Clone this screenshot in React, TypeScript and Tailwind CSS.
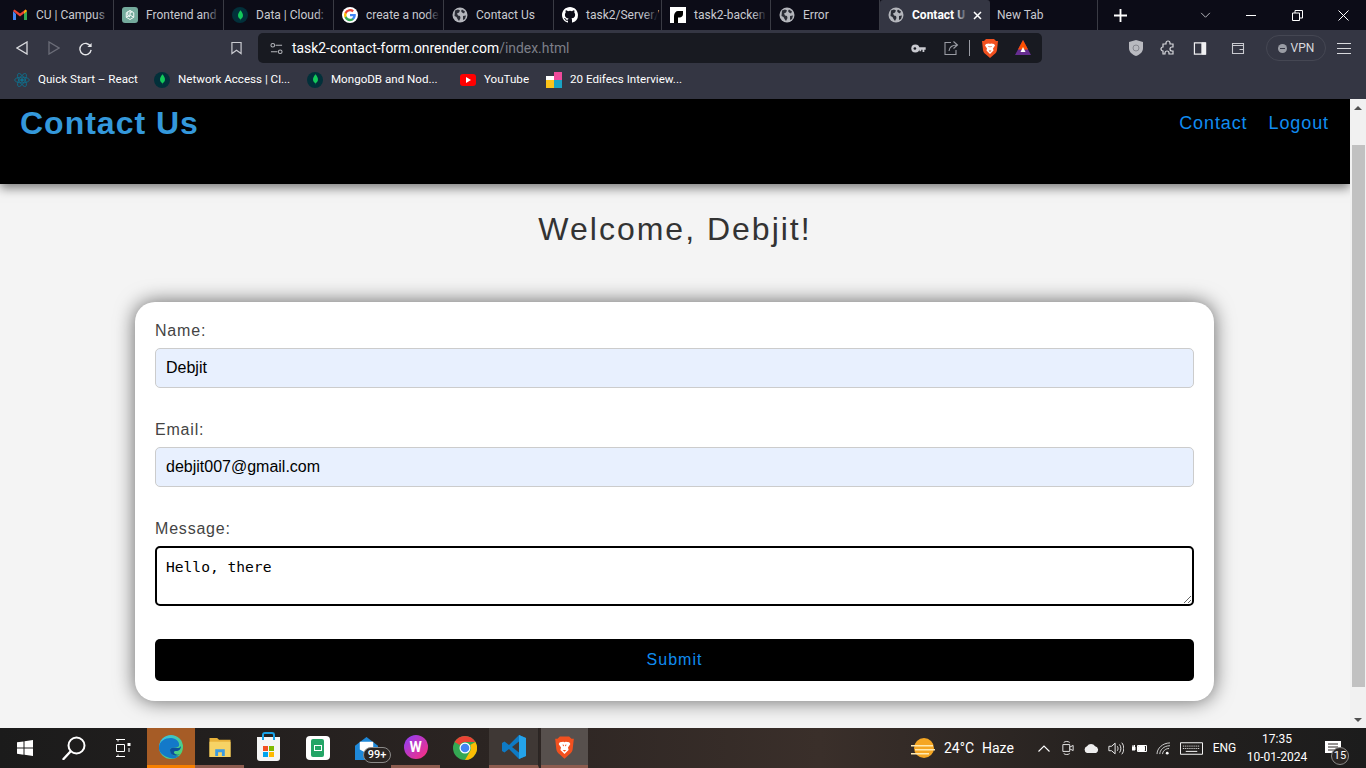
import React from "react";

const uiFont = "font-['Roboto',sans-serif]";

const Globe = () => (
  <svg viewBox="0 0 16 16" className="w-4 h-4 shrink-0">
    <circle cx="8" cy="8" r="7.500" fill="#b4b6bc" />
    <path d="M3 3.500l3-1 2 1-1 2-2 1 1 2 2 .5.5 2-1.500 3-1.500-2-1-2-2-1zM10 2.500l3 2-1 2-2-1-1-1.500zM11 9l3-.5-1 3.500-2 1z" fill="#2b2d36" />
  </svg>
);

const Gmail = () => (
  <svg viewBox="0 0 16 16" className="w-4 h-4 shrink-0">
    <path d="M1 4v9h3V7z" fill="#4285f4" />
    <path d="M15 4v9h-3V7z" fill="#34a853" />
    <path d="M1 4l7 5.500L15 4l-1.500-1.500L8 6.500 2.500 2.500z" fill="#ea4335" />
    <path d="M12 4.500l1.500-2L15 4l-3 3z" fill="#fbbc04" />
  </svg>
);

const Openai = () => (
  <span className="w-4 h-4 shrink-0 rounded-[3px] bg-[#74aa9c] flex items-center justify-center">
    <svg viewBox="0 0 16 16" className="w-3 h-3" fill="none" stroke="#fff" strokeWidth="1.200">
      <path d="M8 2l5 3v6l-5 3-5-3V5z" />
      <path d="M8 2v6l5 3M8 8l-5 3M5 3.500v5l3 2M11 3.500l-3 2" />
    </svg>
  </span>
);

const Mongo = () => (
  <span className="w-4 h-4 shrink-0 rounded-full bg-[#02303a] flex items-center justify-center">
    <svg viewBox="0 0 8 12" className="w-[7px] h-[11px]">
      <path d="M4 0C6 2.500 7 4.500 6.800 6.500 6.600 8.500 5 9.500 4.300 10L4 12l-.3-2C3 9.500 1.400 8.500 1.200 6.500 1 4.500 2 2.500 4 0z" fill="#13c95a" />
    </svg>
  </span>
);

const Google = () => (
  <span className="w-4 h-4 shrink-0 rounded-full bg-white flex items-center justify-center">
    <svg viewBox="0 0 24 24" className="w-[14px] h-[14px]">
      <path d="M22 12.200c0-.7-.1-1.400-.2-2H12v3.900h5.600a4.800 4.800 0 0 1-2.100 3.100v2.600h3.300c2-1.800 3.200-4.500 3.200-7.600z" fill="#4285f4" />
      <path d="M12 22.500c2.800 0 5.200-.9 6.800-2.500l-3.300-2.600c-.9.600-2.100 1-3.500 1-2.700 0-5-1.800-5.800-4.300H2.800v2.600A10.500 10.500 0 0 0 12 22.500z" fill="#34a853" />
      <path d="M6.200 14.100a6.300 6.300 0 0 1 0-4.100V7.300H2.800a10.500 10.500 0 0 0 0 9.400z" fill="#fbbc04" />
      <path d="M12 5.700c1.500 0 2.900.5 3.900 1.500l2.900-2.900A10.500 10.500 0 0 0 2.800 7.300l3.400 2.700C7 7.500 9.300 5.700 12 5.700z" fill="#ea4335" />
    </svg>
  </span>
);

const Github = () => (
  <svg viewBox="0 0 16 16" className="w-4 h-4 shrink-0" fill="#fff">
    <path d="M8 0C3.580 0 0 3.580 0 8c0 3.540 2.290 6.530 5.470 7.590.4.070.55-.17.55-.38 0-.19-.01-.82-.01-1.490-2.010.37-2.530-.49-2.690-.94-.09-.23-.48-.94-.82-1.130-.28-.15-.68-.52-.01-.53.63-.01 1.080.58 1.230.82.720 1.210 1.870.87 2.330.66.070-.52.280-.87.510-1.070-1.780-.2-3.640-.89-3.640-3.950 0-.87.310-1.590.82-2.150-.08-.2-.36-1.020.08-2.120 0 0 .67-.21 2.200.82a7.500 7.500 0 0 1 4 0c1.530-1.040 2.200-.82 2.200-.82.440 1.100.160 1.920.080 2.120.51.560.82 1.270.82 2.150 0 3.070-1.870 3.750-3.650 3.950.29.250.54.730.54 1.480 0 1.070-.01 1.930-.01 2.200 0 .21.150.46.550.38A8.010 8.010 0 0 0 16 8c0-4.420-3.580-8-8-8z" />
  </svg>
);

const Render = () => (
  <svg viewBox="0 0 16 16" className="w-4 h-4 shrink-0">
    <rect width="16" height="16" fill="#fff" />
    <path d="M4 16V9c0-3 2-5 4-5h5v3c0 2-1.500 3.500-3.500 3.500H8V16z" fill="#000" />
  </svg>
);

const Brave = ({ size = "w-[18px] h-[20px]" }: { size?: string }) => (
  <svg viewBox="0 0 18 20" className={size + " shrink-0"}>
    <path d="M5 1h8l2 2 2 0-1 9c-.3 2-1 3-3 4.500L9 20l-4-3.500C3 15 2.300 14 2 12L1 3l2 0z" fill="#f1501f" />
    <path d="M5 6l3-.5 1 .5 1-.5 3 .5 1 1.500-2 3 .5 2L9 16l-3.500-3.500.5-2-2-3z" fill="#fff" />
    <path d="M7 8h1.500v1.500zM11 8H9.500v1.500zM7.500 12.500h3L9 14z" fill="#f1501f" />
  </svg>
);

const Tab = ({ icon, title, active, fade, w = "w-[110px]" }: { icon: React.ReactNode; title: string; active?: boolean; fade?: boolean; w?: string }) => (
  <div
    className={
      w +
      " h-full shrink-0 flex items-center pl-2 gap-[8px] relative whitespace-nowrap " +
      (active ? "bg-[#343643] rounded-t-[3px] text-white font-bold" : "text-[#c9cad0] border-r border-[#3a3b44]")
    }
  >
    {icon}
    <span>{title}</span>
    {fade && (
      <span
        className={
          "absolute top-0 bottom-0 w-[14px] bg-gradient-to-r from-transparent " +
          (active ? "right-[22px] to-[#343643]" : "right-[3px] to-[#0c0c17]")
        }
      />
    )}
    {active && (
      <svg viewBox="0 0 9 9" className="absolute right-[8px] w-[9px] h-[9px]" stroke="#fff" strokeWidth="1.500">
        <path d="M1 1l7 7M8 1 1 8" />
      </svg>
    )}
  </div>
);

const Bookmark = ({ icon, label, w }: { icon: React.ReactNode; label: string; w: string }) => (
  <div className={w + " flex items-center gap-[8px] shrink-0 text-white whitespace-nowrap"}>
    {icon}
    <span>{label}</span>
  </div>
);

const ReactLogo = () => (
  <svg viewBox="0 0 24 24" className="w-4 h-4 shrink-0" fill="none" stroke="#0f6f8c" strokeWidth="1.300">
    <circle cx="12" cy="12" r="2" fill="#0f6f8c" />
    <ellipse cx="12" cy="12" rx="11" ry="4.300" />
    <ellipse cx="12" cy="12" rx="11" ry="4.300" transform="rotate(60 12 12)" />
    <ellipse cx="12" cy="12" rx="11" ry="4.300" transform="rotate(120 12 12)" />
  </svg>
);

const Youtube = () => (
  <span className="w-4 h-[12px] shrink-0 rounded-[3px] bg-[#f00] flex items-center justify-center">
    <span className="w-0 h-0 border-y-[3px] border-y-transparent border-l-[5px] border-l-white" />
  </span>
);

const Edifecs = () => (
  <svg viewBox="0 0 16 16" className="w-4 h-4 shrink-0">
    <rect x="8" y="0" width="8" height="8" fill="#ef4a9b" />
    <rect x="8" y="8" width="8" height="8" fill="#1aa3c4" />
    <rect x="0" y="8" width="8" height="8" fill="#fcc419" />
    <rect x="0" y="4" width="8" height="4" fill="#fff" />
  </svg>
);

const Field = ({ label, value }: { label: string; value: string }) => (
  <div className="mb-[33px]">
    <label className="block text-[16px] leading-[18px] tracking-[0.800px] text-[#444] mb-[8px]">{label}</label>
    <input
      readOnly
      value={value}
      className="block w-full h-[40px] px-[10px] text-[16px] text-black bg-[#e8f0fe] border border-[#ccc] rounded-[5px] outline-none"
    />
  </div>
);

const TaskSlot = ({ children, cls = "" }: { children: React.ReactNode; cls?: string }) => (
  <div className={"w-[49px] h-full shrink-0 flex items-center justify-center relative " + cls}>{children}</div>
);

export default function App() {
  return (
    <div className="w-[1366px] h-[768px] flex flex-col overflow-hidden font-['Liberation_Sans',sans-serif]">
      {/* tab strip */}
      <div className={"h-[30px] shrink-0 bg-[#0c0c17] flex items-center pl-[4px] text-[12px] " + uiFont}>
        <Tab icon={<Gmail />} title="CU | Campus" fade />
        <Tab icon={<Openai />} title="Frontend and" fade />
        <Tab icon={<Mongo />} title="Data | Cloud:" fade />
        <Tab icon={<Google />} title="create a node" fade />
        <Tab icon={<Globe />} title="Contact Us" />
        <Tab icon={<Github />} title="task2/Server/" w="w-[108px]" fade />
        <Tab icon={<Render />} title="task2-backen" w="w-[109px]" fade />
        <Tab icon={<Globe />} title="Error" w="w-[109px]" />
        <Tab icon={<Globe />} title="Contact U" active fade />
        <div className="w-[108px] h-full shrink-0 flex items-center pl-[7px] text-[#c9cad0] border-r border-[#3a3b44]">New Tab</div>
        <svg viewBox="0 0 14 14" className="w-[13px] h-[13px] ml-[16px]" stroke="#fff" strokeWidth="2">
          <path d="M7 0v14M0 7h14" />
        </svg>
        <svg viewBox="0 0 12 8" className="w-[11px] h-[7px] ml-[73px]" fill="none" stroke="#c9cad0">
          <path d="M1 1l5 5 5-5" />
        </svg>
        <span className="w-[10px] h-px bg-white ml-[35px]" />
        <svg viewBox="0 0 11 11" className="w-[11px] h-[11px] ml-[36px]" fill="none" stroke="#fff">
          <path d="M.5 3h7v7.500h-7zM3 3V.5h7.500V8H8" />
        </svg>
        <svg viewBox="0 0 11 11" className="w-[11px] h-[11px] ml-[35px]" stroke="#fff">
          <path d="M.5.5l10 10M10.500.5l-10 10" />
        </svg>
      </div>

      {/* toolbar */}
      <div className={"h-[36px] shrink-0 bg-[#343643] flex items-center text-[13.900px] " + uiFont}>
        <svg viewBox="0 0 12 14" className="w-[12px] h-[14px] ml-[16px]" fill="none" stroke="#d8d9dd" strokeWidth="1.300">
          <path d="M11 1v12L1 7z" />
        </svg>
        <svg viewBox="0 0 12 14" className="w-[12px] h-[14px] ml-[20px]" fill="none" stroke="#6b6d78" strokeWidth="1.300">
          <path d="M1 1v12l10-6z" />
        </svg>
        <svg viewBox="0 0 16 16" className="w-[15px] h-[15px] ml-[18px]" fill="none" stroke="#e4e5e8" strokeWidth="1.500">
          <path d="M13.500 6A6 6 0 1 0 14 9.500" />
          <path d="M14.500 2v4.500H10" fill="#e4e5e8" stroke="none" />
        </svg>
        <svg viewBox="0 0 12 14" className="w-[11px] h-[14px] ml-[138px]" fill="none" stroke="#c9cad0" strokeWidth="1.300">
          <path d="M1 1h10v12l-5-3.500L1 13z" />
        </svg>
        <div className="w-[784px] h-[30px] ml-[16px] rounded-[5px] bg-[#181a21] flex items-center pl-[12px] pr-[10px]">
          <svg viewBox="0 0 14 14" className="w-[13px] h-[13px]" fill="none" stroke="#b5b6bc" strokeWidth="1.100">
            <circle cx="3" cy="3.500" r="2" />
            <circle cx="11" cy="10.500" r="2" />
            <path d="M6 3.500h7M1 10.500h7" />
          </svg>
          <span className="ml-[9px] text-white whitespace-nowrap">
            task2-contact-form.onrender.com<span className="text-[#7d7f88]">/index.html</span>
          </span>
          <span className="flex-1" />
          <svg viewBox="0 0 16 10" className="w-[15px] h-[9px]" fill="#c9cad0">
            <circle cx="4.500" cy="5" r="4.500" />
            <path d="M8 3.500h8v3h-1.500V9h-2V6.500H11V8H9V6.500H8z" />
            <circle cx="4" cy="5" r="1.500" fill="#181a21" />
          </svg>
          <svg viewBox="0 0 16 16" className="w-[16px] h-[16px] ml-[17px]" fill="none" stroke="#9a9ca4" strokeWidth="1.100">
            <path d="M8 2.500H2v12h11V10M6 11c.5-4 3-6 8-6M10.500 1.500 14.500 5l-4 3.500" />
          </svg>
          <span className="w-px h-[16px] bg-[#9a9ca4] ml-[10px]" />
          <span className="ml-[11px] flex"><Brave /></span>
          <svg viewBox="0 0 18 18" className="w-[18px] h-[18px] ml-[15px]">
            <path d="M9 1l8 15H1z" fill="#662d91" />
            <path d="M9 1l5 9.500H4z" fill="#ff5000" />
            <path d="M9 8l2.500 5h-5z" fill="#fff" />
          </svg>
        </div>
        <svg viewBox="0 0 14 16" className="w-[14px] h-[16px] ml-[87px]">
          <path d="M7 0l7 2v6c0 4-3 6.500-7 8-4-1.500-7-4-7-8V2z" fill="#b9bac0" />
          <circle cx="7" cy="8" r="3" fill="none" stroke="#85868e" />
        </svg>
        <svg viewBox="0 0 16 16" className="w-[16px] h-[16px] ml-[17px]" fill="none" stroke="#d8d9dd" strokeWidth="1.200">
          <path d="M3 4h3V3a2 2 0 0 1 4 0v1h3v3h-1a2 2 0 0 0 0 4h1v3H9v-1a2 2 0 0 0-4 0v1H3v-3a2 2 0 0 1 0-4z" />
        </svg>
        <svg viewBox="0 0 14 14" className="w-[14px] h-[13px] ml-[17px]" fill="#f0f0f2" stroke="#f0f0f2">
          <path d="M1 1h12v12H1z" fill="none" strokeWidth="1.300" />
          <path d="M9 1h4v12H9z" />
        </svg>
        <svg viewBox="0 0 14 14" className="w-[14px] h-[14px] ml-[24px]" fill="none" stroke="#c9cad0" strokeWidth="1.100">
          <path d="M1.500 2.500h11v10h-11zM1.500 4.500h11M8.500 8.500h4" />
        </svg>
        <div className="w-[60px] h-[26px] ml-[21px] rounded-full border border-[#454753] flex items-center justify-center gap-[4px] text-[#d8d9dd] text-[12px]">
          <span className="w-[9px] h-[9px] rounded-full bg-[#9a9ca4] flex items-center justify-center">
            <span className="w-[5px] h-px bg-[#343643]" />
          </span>
          VPN
        </div>
        <div className="ml-[11px] flex flex-col gap-[4px]">
          <span className="block w-[14px] h-px bg-[#d8d9dd]" />
          <span className="block w-[14px] h-px bg-[#d8d9dd]" />
          <span className="block w-[14px] h-px bg-[#d8d9dd]" />
        </div>
      </div>

      {/* bookmarks */}
      <div className={"h-[33px] shrink-0 bg-[#343643] flex items-center pl-[14px] pb-[5px] text-[11.600px] " + uiFont}>
        <Bookmark icon={<ReactLogo />} label="Quick Start – React" w="w-[140px]" />
        <Bookmark icon={<Mongo />} label="Network Access | Cl..." w="w-[153px]" />
        <Bookmark icon={<Mongo />} label="MongoDB and Nod..." w="w-[153px]" />
        <Bookmark icon={<Youtube />} label="YouTube" w="w-[86px]" />
        <Bookmark icon={<Edifecs />} label="20 Edifecs Interview..." w="w-[150px]" />
      </div>

      {/* page */}
      <div className="h-[629px] shrink-0 flex bg-[#f4f4f4]">
        <div className="flex-1 min-w-0 flex flex-col overflow-hidden">
          <header className="h-[85px] shrink-0 bg-black shadow-[0_4px_10px_rgba(0,0,0,0.5)] flex items-start justify-between pl-[20px] pr-[21px] relative">
            <h1 className="text-[32px] leading-[48px] font-bold tracking-[1px] text-[#3498db]">Contact Us</h1>
            <nav className="flex gap-[21px] pt-[12px] text-[#108cf0] text-[18px] leading-[24px] tracking-[0.900px]">
              <a>Contact</a>
              <a>Logout</a>
            </nav>
          </header>
          <h2 className="text-[32px] leading-[40px] mt-[25px] text-center tracking-[2px] text-[#333]">Welcome, Debjit!</h2>
          <form className="mt-[53px] mx-[135px] w-[1079px] h-[399px] shrink-0 bg-white rounded-[20px] shadow-[0_0_20px_rgba(0,0,0,0.6)] px-[20px] pt-[20px]">
            <Field label="Name:" value="Debjit" />
            <Field label="Email:" value="debjit007@gmail.com" />
            <label className="block text-[16px] leading-[18px] tracking-[0.800px] text-[#444] mb-[8px]">Message:</label>
            <textarea
              readOnly
              value="Hello, there"
              className="block w-full h-[60px] px-[9px] py-[10px] text-[14.600px] leading-[17px] text-black bg-white border-2 border-black rounded-[5px] outline-none font-['DejaVu_Sans_Mono',monospace]"
            />
            <button
              type="button"
              className="block w-full h-[42px] mt-[33px] bg-black rounded-[5px] text-[#108cf0] text-[16px] tracking-[1px]"
            >
              Submit
            </button>
          </form>
        </div>
        {/* scrollbar */}
        <div className="w-[16px] shrink-0 bg-[#f1f1f1] flex flex-col items-center">
          <div className="h-[17px] shrink-0 flex items-center justify-center">
            <span className="w-0 h-0 border-x-[4px] border-x-transparent border-b-[4px] border-b-[#505050]" />
          </div>
          <div className="h-[29px] shrink-0" />
          <div className="h-[542px] w-[13px] shrink-0 bg-[#c1c1c1]" />
          <div className="flex-1" />
          <div className="h-[17px] shrink-0 flex items-center justify-center">
            <span className="w-0 h-0 border-x-[4px] border-x-transparent border-t-[4px] border-t-[#505050]" />
          </div>
        </div>
      </div>

      {/* taskbar */}
      <div className={"h-[40px] shrink-0 flex items-center bg-[linear-gradient(90deg,#1b1b1b_0%,#2b2422_35%,#3a2f2a_60%,#262220_80%,#1c1c1c_100%)] text-white " + uiFont}>
        <TaskSlot>
          <svg viewBox="0 0 16 16" className="w-[16px] h-[16px]" fill="#fff">
            <path d="M0 2.300 6.500 1.400v6.200H0zM7.500 1.300 16 0v7.600H7.500zM0 8.500h6.500v6.200L0 13.700zM7.500 8.500H16V16l-8.500-1.200z" />
          </svg>
        </TaskSlot>
        <TaskSlot>
          <svg viewBox="0 0 24 24" className="w-[24px] h-[24px]" fill="none" stroke="#fff" strokeWidth="2">
            <circle cx="14.500" cy="9.500" r="8" />
            <path d="M8.500 15.500 1.500 23" strokeWidth="2.400" strokeLinecap="round" />
          </svg>
        </TaskSlot>
        <TaskSlot>
          <svg viewBox="0 0 16 18" className="w-[16px] h-[18px]" fill="none" stroke="#fff">
            <path d="M1 .5h9M1 17.500h9M1.500 5.500h8v7h-8zM3 .5v2M3 15.500v2" />
            <rect x="12.500" y="4" width="3" height="3" fill="#fff" stroke="none" />
            <path d="M14 9v4" />
          </svg>
        </TaskSlot>
        <TaskSlot cls="bg-[#a65c26] border-b-[3px] border-[#f77f00] !w-[48px]">
          <svg viewBox="0 0 24 24" className="w-[24px] h-[24px]">
            <defs>
              <linearGradient id="edge" x1="0" y1="0" x2="1" y2="1">
                <stop offset="0" stopColor="#35c1f1" />
                <stop offset="1" stopColor="#56d45c" />
              </linearGradient>
            </defs>
            <circle cx="12" cy="12" r="12" fill="url(#edge)" />
            <path d="M0 13C0 6 6 3 12 3c5 0 9 4 8 8-2 3-9 0-9 4 0 3 3 7 9 6-3 3-8 3-12 1-5-2-8-5-8-9z" fill="#1379c9" />
            <path d="M11 15c0-3 5-2 8-2 2 0 3-2 3-2 0 3-2 5-5 5-2 0-3 1-1 3 2 1 4 1 5 0-3 3-10 2-10-4z" fill="#0c4f9c" />
          </svg>
        </TaskSlot>
        <TaskSlot cls="border-b-[3px] border-[#8d5c4f]">
          <svg viewBox="0 0 24 22" className="w-[24px] h-[21px]">
            <path d="M1 2h8l2 2h12v18H1z" fill="#e8b23a" />
            <rect x="1" y="6" width="22" height="16" fill="#f6d365" />
            <path d="M7 21v-7h10v7h-3v-4h-4v4z" fill="#3c9be0" />
          </svg>
        </TaskSlot>
        <TaskSlot>
          <div className="w-[23px] h-[24px] mt-[2px] bg-[#f5f5f5] rounded-b-[3px] relative flex items-end justify-center pb-[4px]">
            <span className="absolute -top-[5px] left-[5px] w-[13px] h-[8px] border-2 border-b-0 border-[#1aa3e8] rounded-t-[3px]" />
            <span className="grid grid-cols-2 gap-px">
              <span className="w-[5px] h-[5px] bg-[#f25022]" />
              <span className="w-[5px] h-[5px] bg-[#7fba00]" />
              <span className="w-[5px] h-[5px] bg-[#00a4ef]" />
              <span className="w-[5px] h-[5px] bg-[#ffb900]" />
            </span>
          </div>
        </TaskSlot>
        <TaskSlot>
          <div className="w-[24px] h-[24px] rounded-[4px] bg-white flex items-center justify-center">
            <div className="w-[13px] h-[18px] rounded-[2px] bg-[#23a566] flex items-center justify-center">
              <span className="w-[8px] h-[6px] border border-white" />
            </div>
          </div>
        </TaskSlot>
        <TaskSlot>
          <svg viewBox="0 0 24 24" className="w-[23px] h-[23px]">
            <path d="M0 9 12 0l12 9v15H0z" fill="#1e88d9" />
            <path d="M5 5h14v8l-7 4-7-4z" fill="#fff" />
          </svg>
          <span className="absolute left-[21px] top-[19px] w-[28px] h-[16px] rounded-full bg-[#2a2523] border border-[#8b8a89] text-[11px] font-medium leading-[14px] text-center text-white">99+</span>
        </TaskSlot>
        <TaskSlot cls="border-b-[3px] border-[#8d5c4f]">
          <span className="w-[24px] h-[24px] rounded-full bg-[linear-gradient(135deg,#8a3ffc,#ff2d78)] flex items-center justify-center text-white text-[14px] font-bold leading-none">W</span>
        </TaskSlot>
        <TaskSlot>
          <svg viewBox="0 0 24 24" className="w-[24px] h-[24px]">
            <circle cx="12" cy="12" r="12" fill="#34a853" />
            <path d="M12 0a12 12 0 0 1 10.400 6H12a6 6 0 0 0-5.200 3L1.600 6A12 12 0 0 1 12 0z" fill="#ea4335" />
            <path d="M22.400 6A12 12 0 0 1 12 24l5.200-9a6 6 0 0 0 0-6z" fill="#fbbc04" />
            <circle cx="12" cy="12" r="5.500" fill="#fff" />
            <circle cx="12" cy="12" r="4.300" fill="#4285f4" />
          </svg>
        </TaskSlot>
        <TaskSlot cls="bg-[#3f3835] border-b-[3px] border-[#8d5c4f] border-r border-r-[#2a2523] !w-[50px]">
          <svg viewBox="0 0 24 24" className="w-[24px] h-[24px]">
            <path d="M17 0 7 10 2.500 6.500 0 8v8l2.500 1.500L7 14l10 10 7-3V3z" fill="#0e7ac4" />
            <path d="M17 6.500 10 12l7 5.500z" fill="#3f3835" />
            <path d="M17 0l7 3v18l-7 3z" fill="#24a3ea" />
          </svg>
        </TaskSlot>
        <TaskSlot cls="bg-[#57504d] border-b-[3px] border-[#8d5c4f] ml-[2px] !w-[47px]">
          <Brave size="w-[21px] h-[24px]" />
        </TaskSlot>

        <span className="flex-1" />

        <svg viewBox="0 0 24 24" className="w-[24px] h-[24px] shrink-0 mr-[9px]">
          <circle cx="13" cy="12" r="10" fill="#f5a623" />
          <path d="M0 9h22v1.500H0zM4 13h20v1.500H4zM0 17h18v1.500H0z" fill="#ffe9b0" />
        </svg>
        <span className="text-[14px] w-[38px] shrink-0 whitespace-nowrap">24°C</span>
        <span className="text-[14px] w-[40px] shrink-0">Haze</span>
        <svg viewBox="0 0 12 7" className="w-[12px] h-[7px] ml-[16px] shrink-0" fill="none" stroke="#fff" strokeWidth="1.100">
          <path d="M.5 6.500 6 1l5.500 5.500" />
        </svg>
        <svg viewBox="0 0 14 18" className="w-[12px] h-[16px] ml-[12px] shrink-0" fill="none" stroke="#fff">
          <path d="M1 5h8v8H1zM9 8l4-2v6l-4-2M2 2.500C4 1 7 1 9 2.500M2 15.500c2 1.500 5 1.500 7 0" />
        </svg>
        <svg viewBox="0 0 18 11" className="w-[17px] h-[10px] ml-[9px] shrink-0" fill="#eee">
          <path d="M4 11a4 4 0 0 1 0-7.500A5.500 5.500 0 0 1 13 3.500a4 4 0 0 1 1 7.500z" />
        </svg>
        <svg viewBox="0 0 18 16" className="w-[16px] h-[15px] ml-[8px] shrink-0" fill="none" stroke="#fff">
          <path d="M1 5.500h3L8 2v12l-4-3.500H1zM10.500 5.500c1 1.500 1 3.500 0 5M13 3.500c2 2.500 2 6.500 0 9M15.500 1.500c3 3.500 3 9.500 0 13" />
        </svg>
        <svg viewBox="0 0 16 12" className="w-[16px] h-[12px] ml-[8px] shrink-0" fill="none" stroke="#fff">
          <path d="M5.500 3.500h9v6h-9z" />
          <path d="M6.500 4.500h6v4h-6zM0 5h3v3H0zM1 5V3M2.500 5V3" fill="#fff" />
        </svg>
        <svg viewBox="0 0 16 14" className="w-[15px] h-[13px] ml-[8px] shrink-0" fill="none" stroke="#d8d8d8">
          <path d="M1 13C1 7 7 1 15 1M4 13c0-4 4-9 11-9M7 13c0-3 3-6 7-6" />
          <circle cx="12" cy="12" r="1.500" fill="#fff" stroke="none" />
        </svg>
        <svg viewBox="0 0 24 13" className="w-[23px] h-[13px] ml-[9px] shrink-0" fill="none" stroke="#fff">
          <path d="M.5.5h23v12H.5z" />
          <path d="M3 4h18M3 6.500h18" strokeDasharray="1 1" />
          <path d="M6 9.500h12" />
        </svg>
        <span className="text-[12px] w-[43px] text-center shrink-0">ENG</span>
        <div className="w-[62px] text-center text-[12px] leading-[18px] shrink-0">
          <div>17:35</div>
          <div className="whitespace-nowrap">10-01-2024</div>
        </div>
        <div className="w-[58px] h-full relative flex items-center justify-center shrink-0 pr-[8px]">
          <svg viewBox="0 0 16 14" className="w-[16px] h-[14px]" fill="#fff" stroke="#2a2523">
            <path d="M0 0h16v12H0z" stroke="none" />
            <path d="M3 3h10M3 6h10M3 9h7" />
          </svg>
          <span className="absolute left-[23px] top-[19px] w-[18px] h-[18px] rounded-full bg-[#2a2523] border border-[#8b8a89] text-[11px] leading-[16px] text-center">15</span>
        </div>
      </div>
    </div>
  );
}
